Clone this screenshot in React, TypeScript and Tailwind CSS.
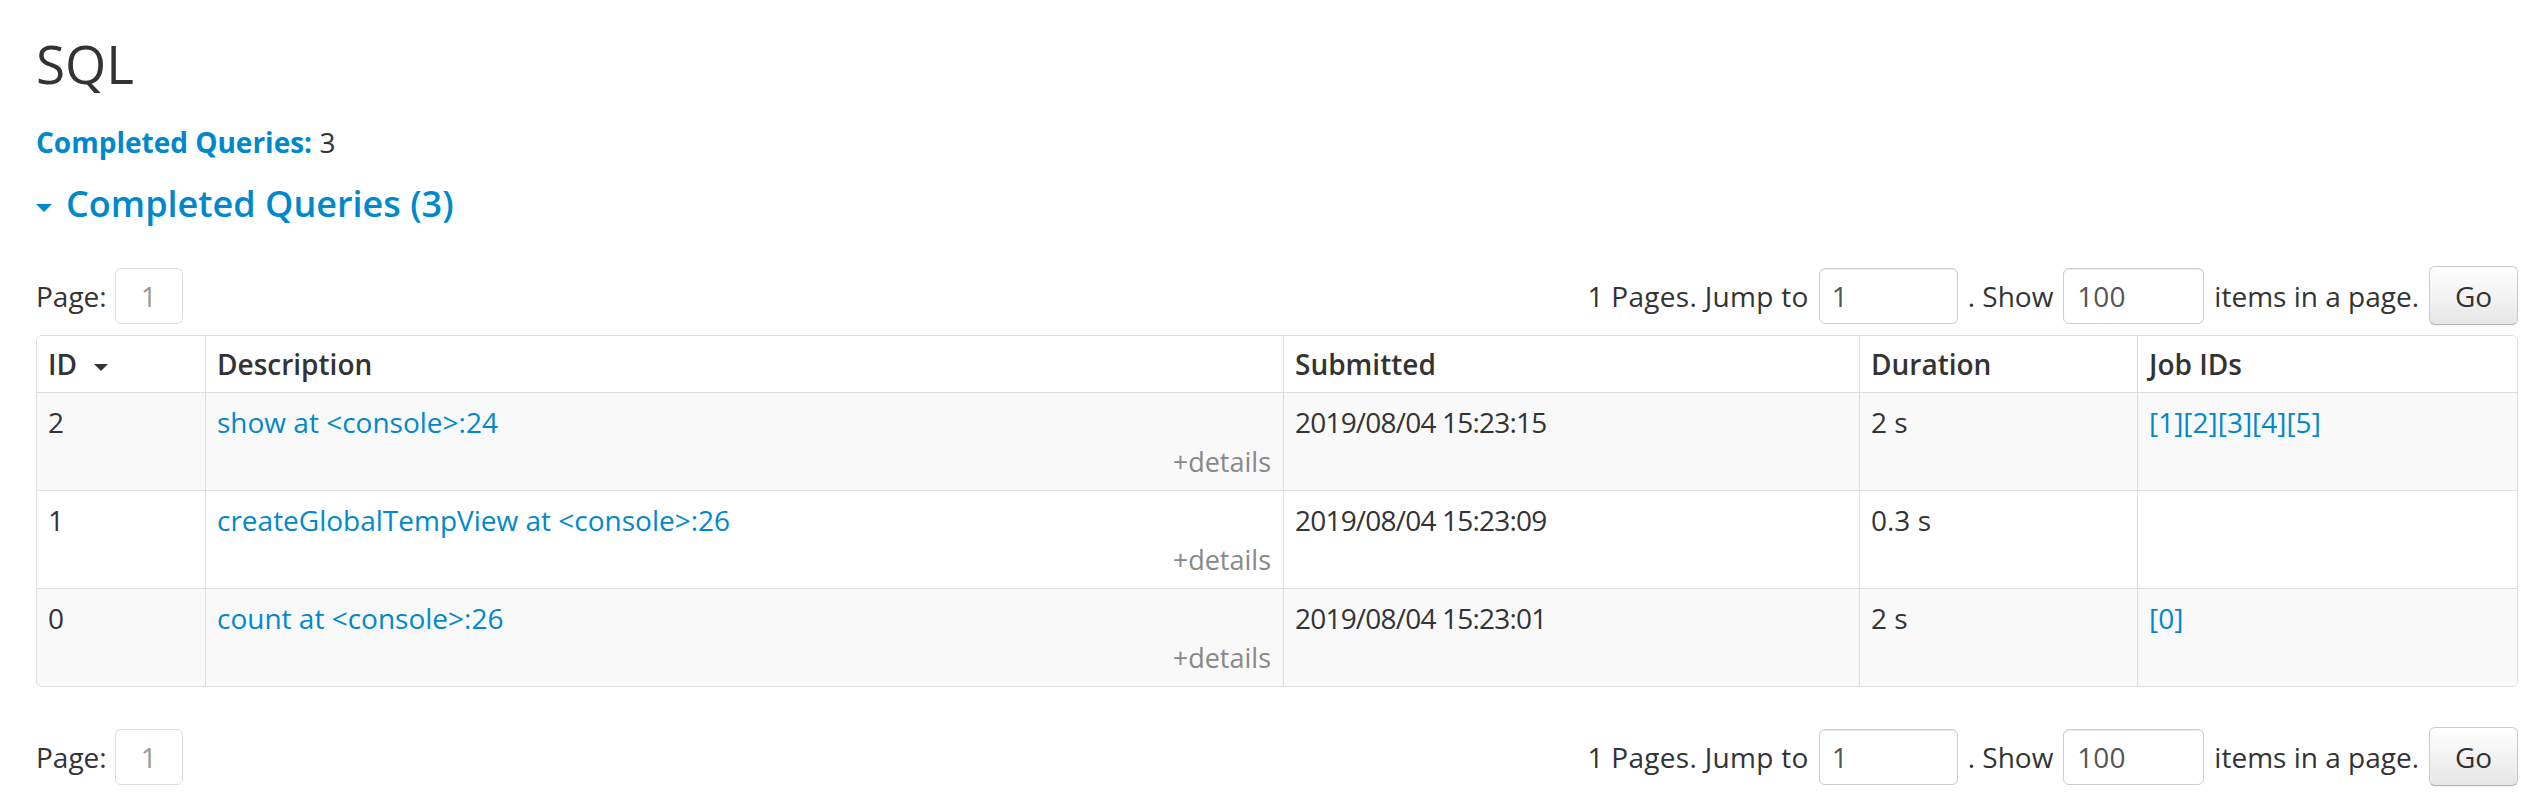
import React from 'react';

interface QueryRow {
  id: number;
  description: string;
  submitted: string;
  duration: string;
  jobs: number[];
}

const rows: QueryRow[] = [
  { id: 2, description: 'show at <console>:24', submitted: '2019/08/04 15:23:15', duration: '2 s', jobs: [1, 2, 3, 4, 5] },
  { id: 1, description: 'createGlobalTempView at <console>:26', submitted: '2019/08/04 15:23:09', duration: '0.3 s', jobs: [] },
  { id: 0, description: 'count at <console>:26', submitted: '2019/08/04 15:23:01', duration: '2 s', jobs: [0] },
];

function DownArrow({ className }: { className?: string }) {
  return (
    <svg viewBox="0 0 16 8" className={className} fill="currentColor">
      <path d="M0 0h16L8 8z" />
    </svg>
  );
}

function Pager() {
  return (
    <div className="flex h-[59px] items-center justify-between">
      <div className="flex items-center gap-[8px]">
        <span>Page:</span>
        <span className="flex h-[56px] w-[68px] items-center justify-center rounded-[6px] border border-[#ddd] text-[#999]">
          1
        </span>
      </div>
      <div className="flex items-center gap-[10px]">
        <span className="tracking-[0.3px]">1 Pages. Jump to</span>
        <input
          readOnly
          value="1"
          className="h-[56px] w-[139px] rounded-[6px] border border-[#ccc] px-[12px] text-[#555] shadow-[inset_0_1px_1px_rgba(0,0,0,0.075)] outline-none"
        />
        <span>. Show</span>
        <input
          readOnly
          value="100"
          className="h-[56px] w-[141px] rounded-[6px] border border-[#ccc] px-[13px] text-[#555] shadow-[inset_0_1px_1px_rgba(0,0,0,0.075)] outline-none"
        />
        <span>items in a page.</span>
        <button
          type="button"
          className="h-[59px] w-[89px] rounded-[6px] border border-[#ccc] border-b-[#b3b3b3] bg-gradient-to-b from-white to-[#e6e6e6] text-[#333] shadow-[0_1px_2px_rgba(0,0,0,0.05)]"
        >
          Go
        </button>
      </div>
    </div>
  );
}

export default function App() {
  return (
    <div className="min-h-screen bg-white pl-[36px] pr-[28px] font-['Open_Sans',sans-serif] text-[28px] leading-[40px] text-[#333]">
      <h3 className="mt-[34px] text-[53px] leading-[60px] text-[#333]">SQL</h3>

      <ul className="mt-[28px]">
        <li>
          <a href="#completed" className="font-bold text-[#0088cc]">
            Completed Queries:
          </a>{' '}
          3
        </li>
      </ul>

      <h4 id="completed" className="mt-[19px] flex items-center text-[36px] leading-[45px] font-semibold text-[#0088cc]">
        <DownArrow className="mr-[14px] mt-[8px] h-[8px] w-[16px]" />
        Completed Queries (3)
      </h4>

      <div className="mt-[40px]">
        <Pager />
      </div>

      <div className="mt-[10px] overflow-hidden rounded-[6px] border border-[#ddd]">
        <table className="w-full table-fixed border-separate border-spacing-0">
          <colgroup>
            <col className="w-[168px]" />
            <col className="w-[1078px]" />
            <col className="w-[576px]" />
            <col className="w-[278px]" />
            <col className="w-[380px]" />
          </colgroup>
          <thead>
            <tr className="bg-white text-left">
              <th className="px-[11px] py-[8px] font-semibold">
                <span className="flex items-center">
                  ID
                  <DownArrow className="ml-[17px] mt-[6px] h-[7px] w-[14px]" />
                </span>
              </th>
              <th className="border-l border-[#ddd] px-[11px] py-[8px] font-semibold">Description</th>
              <th className="border-l border-[#ddd] px-[11px] py-[8px] font-semibold">Submitted</th>
              <th className="border-l border-[#ddd] px-[11px] py-[8px] font-semibold">Duration</th>
              <th className="border-l border-[#ddd] px-[11px] py-[8px] font-semibold">Job IDs</th>
            </tr>
          </thead>
          <tbody>
            {rows.map((r, i) => (
              <tr key={r.id} className={i % 2 === 0 ? 'bg-[#f9f9f9]' : 'bg-white'}>
                <td className="border-t border-[#ddd] px-[11px] pt-[9px] pb-[8px] align-top">{r.id}</td>
                <td className="border-l border-t border-[#ddd] pl-[11px] pr-[12px] pt-[9px] pb-[8px] align-top">
                  <a href="#" className="block text-[#0088cc]">
                    {r.description}
                  </a>
                  <span className="block text-right text-[27px] text-[#888]">+details</span>
                </td>
                <td className="border-l border-t border-[#ddd] px-[11px] pt-[9px] pb-[8px] align-top tracking-[-0.8px]">
                  {r.submitted}
                </td>
                <td className="border-l border-t border-[#ddd] px-[11px] pt-[9px] pb-[8px] align-top">{r.duration}</td>
                <td className="border-l border-t border-[#ddd] px-[11px] pt-[9px] pb-[8px] align-top">
                  {r.jobs.map((j) => (
                    <a key={j} href="#" className="text-[#0088cc]">
                      [{j}]
                    </a>
                  ))}
                </td>
              </tr>
            ))}
          </tbody>
        </table>
      </div>

      <div className="mt-[40px]">
        <Pager />
      </div>
    </div>
  );
}
